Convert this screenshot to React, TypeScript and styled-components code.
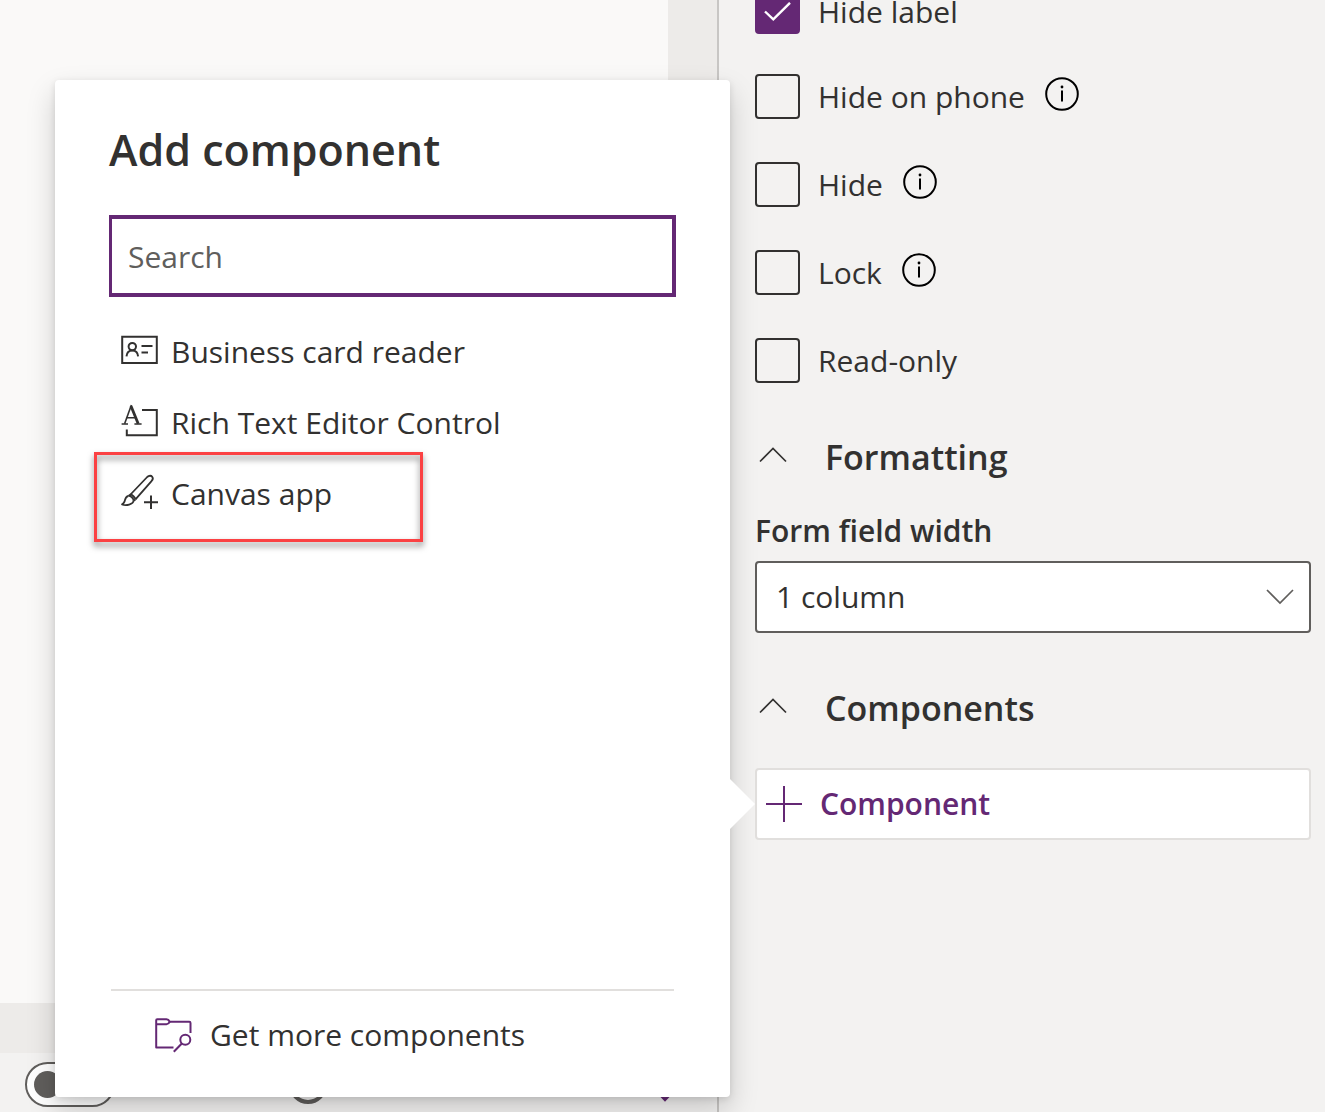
import React, { useState } from 'react';
import styled, { createGlobalStyle } from 'styled-components';

const ink = '#323130';
const muted = '#605e5c';
const purple = '#642874';

const GlobalStyle = createGlobalStyle`
  *, *::before, *::after { box-sizing: border-box; }
  body {
    margin: 0;
    background: #f3f2f1;
    color: ${ink};
    font-family: "Open Sans", "Noto Sans", sans-serif;
    font-size: 30px;
    line-height: 40px;
  }
  input, button, select { font: inherit; color: inherit; }
  svg { display: block; flex: none; }
`;

const Page = styled.div`
  display: flex;
  min-height: 100vh;
  overflow: hidden;
`;

const Designer = styled.main`
  flex: 1;
  min-width: 0;
  display: flex;
  flex-direction: column;
`;

const CanvasArea = styled.div`
  flex: 1;
  display: flex;
  padding: 0 49px 50px 0;
  background: #edebe9;
`;

const FormCanvas = styled.div`
  flex: 1;
  background: #faf9f8;
`;

const StatusBar = styled.footer`
  display: flex;
  align-items: center;
  gap: 174px;
  height: 59px;
  padding: 4px 44px 0 25px;
  background: #f3f2f1;
`;

const Toggle = styled.input`
  appearance: none;
  width: 90px;
  height: 45px;
  margin: 0;
  padding: 7px;
  border: 2px solid ${muted};
  border-radius: 23px;
  background: #fff;

  &::before {
    content: "";
    display: block;
    width: 27px;
    height: 27px;
    border-radius: 50%;
    background: ${muted};
  }
`;

const ZoomKnob = styled.span`
  width: 38px;
  height: 38px;
  border: 4px solid ${muted};
  border-radius: 50%;
`;

const StatusCaret = styled.span`
  margin-left: auto;
  padding-top: 24px;
`;

const Properties = styled.aside`
  flex: none;
  width: 608px;
  padding: 0 14px 0 36px;
  border-left: 2px solid #c8c6c4;
  background: #f3f2f1;
`;

const OptionList = styled.div`
  display: flex;
  flex-direction: column;
  gap: 40px;
  margin-top: -11px;
`;

const OptionRow = styled.div<{ $info?: boolean }>`
  display: flex;
  align-items: flex-start;
  height: ${(p) => (p.$info ? 48 : 45)}px;
`;

const OptionLabel = styled.label`
  display: flex;
  align-items: center;
  gap: 18px;
  line-height: 45px;
`;

const CheckFrame = styled.span`
  display: grid;
  width: 45px;
  height: 45px;

  > * { grid-area: 1 / 1; }
  > svg { place-self: center; pointer-events: none; }
`;

const CheckInput = styled.input`
  appearance: none;
  width: 45px;
  height: 45px;
  margin: 0;
  border: 2px solid ${ink};
  border-radius: 4px;

  &:checked { border-color: ${purple}; background: ${purple}; }
`;

const InfoButton = styled.button`
  margin: 3px 0 0 20px;
  padding: 0;
  border: 0;
  background: none;
`;

const SectionHeader = styled.button<{ $top: number }>`
  display: flex;
  align-items: center;
  gap: 38px;
  width: 100%;
  margin-top: ${(p) => p.$top}px;
  padding: 0 0 0 4px;
  border: 0;
  background: none;
  font-size: 34px;
  font-weight: 600;
  line-height: 48px;

  > svg { margin-bottom: 4px; }
`;

const FieldLabel = styled.label`
  display: block;
  margin-top: 30px;
  font-weight: 600;
`;

const SelectFrame = styled.div`
  display: grid;
  align-items: center;
  margin-top: 10px;

  > * { grid-area: 1 / 1; }
  > svg { justify-self: end; margin-right: 17px; pointer-events: none; }
`;

const Select = styled.select`
  appearance: none;
  width: 100%;
  height: 72px;
  padding: 0 60px 0 19px;
  border: 2px solid ${muted};
  border-radius: 4px;
  background: #fff;
`;

const ComponentSlot = styled.div`
  position: relative;
  margin-top: 36px;
`;

const AddButton = styled.button`
  display: flex;
  align-items: center;
  gap: 18px;
  width: 100%;
  height: 72px;
  padding: 0 9px;
  border: 2px solid #e1dfdd;
  border-radius: 4px;
  background: #fff;
  color: ${purple};
  font-weight: 600;
`;

const Callout = styled.section`
  position: absolute;
  right: calc(100% + 25px);
  bottom: -257px;
  display: flex;
  flex-direction: column;
  width: 675px;
  height: 1017px;
  padding: 40px 54px 28px;
  border-radius: 4px;
  background: #fff;
  box-shadow: 0 13px 29px rgba(0, 0, 0, 0.18), 0 2px 7px rgba(0, 0, 0, 0.11);
`;

const Beak = styled.span`
  position: absolute;
  top: 11px;
  right: 100%;
  width: 25px;
  height: 50px;
  background: #fff;
  clip-path: polygon(0 0, 100% 50%, 0 100%);
`;

const CalloutTitle = styled.h2`
  margin: 0;
  font-size: 43px;
  font-weight: 600;
  line-height: 60px;
`;

const SearchBox = styled.input`
  width: 100%;
  height: 82px;
  margin-top: 35px;
  padding: 0 16px;
  border: 4px solid ${purple};
  border-left-width: 3px;
  border-radius: 0;
  outline: 0;
  background: #fff;

  &::placeholder { color: ${muted}; opacity: 1; }
`;

const ComponentList = styled.ul`
  flex: 1;
  margin: 19px 0 0;
  padding: 0;
  list-style: none;
`;

const ComponentItem = styled.li`
  position: relative;
`;

const ItemButton = styled.button`
  display: flex;
  align-items: center;
  gap: 13px;
  width: 100%;
  height: 71px;
  padding: 0 12px;
  border: 0;
  background: none;

  > svg { margin-bottom: 3px; }
`;

const Highlight = styled.span`
  position: absolute;
  top: -6px;
  left: -15px;
  width: 329px;
  height: 90px;
  border: 3px solid #fb4143;
  filter: drop-shadow(0 4px 3px rgba(0, 0, 0, 0.5));
  pointer-events: none;
`;

const CalloutFooter = styled.div`
  margin: 0 2px;
  padding-top: 10px;
  border-top: 2px solid #e1dfdd;
`;

const MoreLink = styled.a`
  display: flex;
  align-items: center;
  gap: 18px;
  height: 68px;
  padding-left: 44px;
  color: inherit;
  text-decoration: none;
`;

const CheckIcon = () => (
  <svg width="27" height="20" viewBox="0 0 27 20" fill="none" stroke="#fff" strokeWidth="2.4">
    <path d="M1 9.5 9.3 17.3 26 .8" />
  </svg>
);

const InfoIcon = () => (
  <svg width="34" height="34" viewBox="0 0 34 34" fill="none" stroke="#000" strokeWidth="2">
    <circle cx="17" cy="17" r="15.8" />
    <path d="M17 13.5V24.5" />
    <circle cx="17" cy="10" r="1.4" fill="#000" stroke="none" />
  </svg>
);

const Chevron = ({ up, color = ink }: { up?: boolean; color?: string }) => (
  <svg width="28" height="16" viewBox="0 0 28 16" fill="none" stroke={color} strokeWidth="1.7">
    <path d={up ? 'M1 14.5 14 1.5 27 14.5' : 'M1 1 14 14 27 1'} />
  </svg>
);

const PlusIcon = () => (
  <svg width="36" height="36" viewBox="0 0 36 36" fill="none" stroke={purple} strokeWidth="2">
    <path d="M18 0V36M0 18H36" />
  </svg>
);

const CardIcon = () => (
  <svg width="37" height="36" viewBox="0 0 37 36" fill="none" stroke={ink} strokeWidth="2">
    <path d="M1.2 4.8H35.8V30.9H1.2Z" />
    <circle cx="11.3" cy="14.6" r="3.7" />
    <path d="M5.5 24.4C5.8 20.6 8 18.4 11.3 18.4S16.8 20.6 17.1 24.4M20.5 14H31.5M20.5 20.5H27" />
  </svg>
);

const RichTextIcon = () => (
  <svg width="37" height="36" viewBox="0 0 37 36" fill="none" stroke={ink} strokeWidth="2">
    <path d="M21 7H35.8V32.3H5.8V26.5" />
    <path d="M3.6 20.8 10.4 2" strokeWidth="1.6" />
    <path d="M10 3 17.2 20.8" strokeWidth="2.8" />
    <path d="M5.8 14.7H14.5M.6 21.1H7M13.4 21.1H20.6" strokeWidth="1.5" />
  </svg>
);

const BrushIcon = () => (
  <svg width="37" height="36" viewBox="0 0 37 36" fill="none" stroke={ink} strokeWidth="1.8" strokeLinejoin="round">
    <path d="M9.5 20.5 26.2 3C28 1.3 30.3 1.5 31.2 2.7C32.2 4 31.9 5.8 30.3 7.3L14.5 25.4" />
    <path d="M9.5 20.5C11 20.5 14.3 23.5 14.5 25.4M7.3 22C9.5 21.6 12.8 24.3 12.5 26.8M9.5 20.5 7.3 22M14.5 25.4 12.5 26.8" />
    <path d="M7.3 22C4.3 22.4 4.2 25.8 3.5 27.7C2.9 29.2 2 30 1 30.3C5 32 12.3 30.4 12.5 26.8" />
    <path d="M30 21.5V35M23 28.3H37" strokeWidth="2" />
  </svg>
);

const FolderSearchIcon = () => (
  <svg width="37" height="36" viewBox="0 0 37 36" fill="none" stroke={purple} strokeWidth="2" strokeLinejoin="round">
    <path d="M18.5 30.5H1.2V3.2Q1.2 2.2 2.2 2.2H11.5Q13.5 2.2 14.8 4.8H34.3Q35.5 4.8 35.5 6V16" />
    <path d="M1.2 7.2H11.5Q13.5 7.2 14.8 4.8" />
    <circle cx="30.3" cy="22.8" r="5" />
    <path d="M26.8 26.5 18.8 34.8" />
  </svg>
);

const MenuCaret = () => (
  <svg width="16" height="10" viewBox="0 0 16 10" fill="none" stroke={purple} strokeWidth="3">
    <path d="M1 0 8 7.5 15 0" />
  </svg>
);

type Option = { id: string; label: string; info?: boolean };

const options: Option[] = [
  { id: 'hide-label', label: 'Hide label' },
  { id: 'hide-on-phone', label: 'Hide on phone', info: true },
  { id: 'hide', label: 'Hide', info: true },
  { id: 'lock', label: 'Lock', info: true },
  { id: 'read-only', label: 'Read-only' },
];

const components = [
  { name: 'Business card reader', Icon: CardIcon },
  { name: 'Rich Text Editor Control', Icon: RichTextIcon },
  { name: 'Canvas app', Icon: BrushIcon, highlighted: true },
];

function OptionField({ id, label, info }: Option) {
  const [checked, setChecked] = useState(id === 'hide-label');
  return (
    <OptionRow $info={info}>
      <OptionLabel htmlFor={id}>
        <CheckFrame>
          <CheckInput id={id} type="checkbox" checked={checked} onChange={(e) => setChecked(e.target.checked)} />
          {checked && <CheckIcon />}
        </CheckFrame>
        {label}
      </OptionLabel>
      {info && (
        <InfoButton type="button" aria-label={`About ${label}`}>
          <InfoIcon />
        </InfoButton>
      )}
    </OptionRow>
  );
}

export default function App() {
  return (
    <Page>
      <GlobalStyle />
      <Designer>
        <CanvasArea>
          <FormCanvas />
        </CanvasArea>
        <StatusBar>
          <Toggle type="checkbox" role="switch" aria-label="Show hidden" />
          <ZoomKnob />
          <StatusCaret>
            <MenuCaret />
          </StatusCaret>
        </StatusBar>
      </Designer>
      <Properties>
        <OptionList>
          {options.map((option) => (
            <OptionField key={option.id} {...option} />
          ))}
        </OptionList>
        <SectionHeader type="button" $top={50}>
          <Chevron up />
          Formatting
        </SectionHeader>
        <FieldLabel htmlFor="field-width">Form field width</FieldLabel>
        <SelectFrame>
          <Select id="field-width">
            <option>1 column</option>
          </Select>
          <Chevron color={muted} />
        </SelectFrame>
        <SectionHeader type="button" $top={51}>
          <Chevron up />
          Components
        </SectionHeader>
        <ComponentSlot>
          <AddButton type="button">
            <PlusIcon />
            Component
          </AddButton>
          <Callout aria-labelledby="callout-title">
            <CalloutTitle id="callout-title">Add component</CalloutTitle>
            <SearchBox type="text" placeholder="Search" aria-label="Search" />
            <ComponentList>
              {components.map(({ name, Icon, highlighted }) => (
                <ComponentItem key={name}>
                  <ItemButton type="button">
                    <Icon />
                    {name}
                  </ItemButton>
                  {highlighted && <Highlight />}
                </ComponentItem>
              ))}
            </ComponentList>
            <CalloutFooter>
              <MoreLink href="#more">
                <FolderSearchIcon />
                Get more components
              </MoreLink>
            </CalloutFooter>
          </Callout>
          <Beak />
        </ComponentSlot>
      </Properties>
    </Page>
  );
}
